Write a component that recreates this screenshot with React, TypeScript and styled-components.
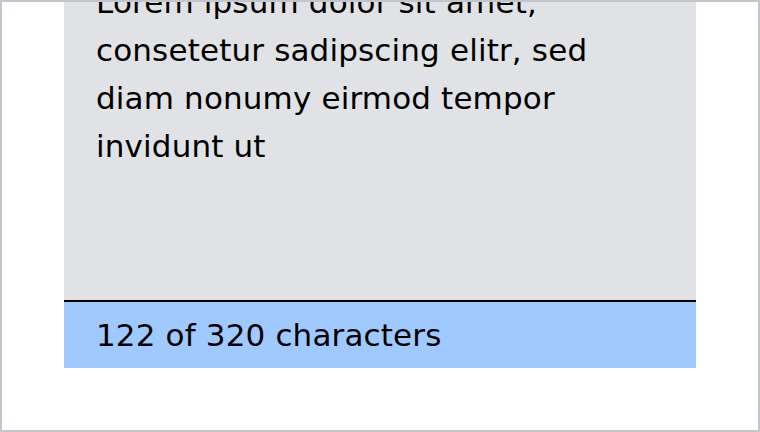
import React from "react";
import styled, { createGlobalStyle } from "styled-components";

const Global = createGlobalStyle`
  html, body { margin: 0; padding: 0; background: #ffffff; }
  * { box-sizing: border-box; }
`;

const Frame = styled.div`
  width: 760px;
  height: 432px;
  border: 2px solid #c1c5cc;
  background: #ffffff;
  overflow: hidden;
  display: flex;
  flex-direction: column;
  justify-content: flex-end;
  padding: 0 62px 62px;
  font-family: "DejaVu Sans", "Noto Sans", sans-serif;
  color: #000000;
`;

const Field = styled.div`
  display: flex;
  flex-direction: column;
  width: 632px;
  flex-shrink: 0;
`;

const Area = styled.div`
  height: 340px;
  background: #e0e2e5;
  border-bottom: 2px solid #000000;
  padding: 16px 44px 0 32px;
  font-size: 31px;
  line-height: 48px;
  letter-spacing: 0.15px;
  flex-shrink: 0;
`;

const Counter = styled.div`
  height: 66px;
  background: #a0c9ff;
  padding: 9px 32px;
  font-size: 31px;
  line-height: 48px;
  letter-spacing: 0.15px;
  flex-shrink: 0;
`;

export default function App() {
  return (
    <>
      <Global />
      <Frame>
        <Field>
          <Area>
            Lorem ipsum dolor sit amet, consetetur sadipscing elitr, sed diam
            nonumy eirmod tempor invidunt ut
          </Area>
          <Counter>122 of 320 characters</Counter>
        </Field>
      </Frame>
    </>
  );
}
